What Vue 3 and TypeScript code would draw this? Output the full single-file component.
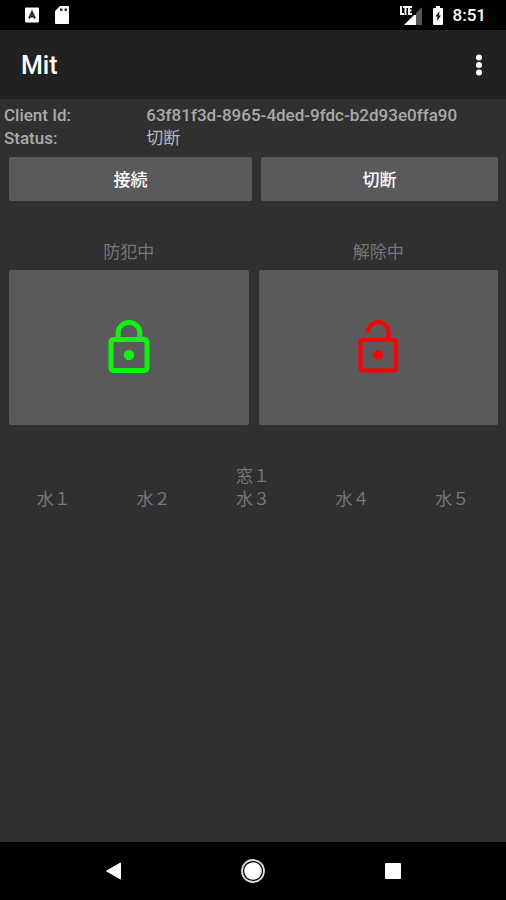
<script setup lang="ts">
import { ref } from 'vue'

const clientId = '63f81f3d-8965-4ded-9fdc-b2d93e0ffa90'
const status = ref('切断')
const windows: string[] = ['窓１']
const waterSensors: string[] = ['水１', '水２', '水３', '水４', '水５']
</script>

<template>
  <div class="screen">
    <div class="status-bar">
      <div class="status-group">
        <svg class="notice" viewBox="0 0 16 16" aria-hidden="true">
          <rect x="1" y="0.5" width="14" height="15" rx="1" fill="#fff" />
          <path d="M5 11.5 L8 5 L11 11.5 M6 9.5 H10" fill="none" stroke="#222" stroke-width="1.8" />
        </svg>
        <svg class="card" viewBox="0 0 16 20" aria-hidden="true">
          <path d="M6 1 H14 Q15 1 15 2 V18 Q15 19 14 19 H2 Q1 19 1 18 V6 Z" fill="#fff" />
          <path d="M6 3.5 H8.5 V6 H6 Z M10.5 3.5 H13 V6 H10.5 Z" fill="#333" />
        </svg>
      </div>
      <div class="status-group status-right">
        <svg class="signal" viewBox="0 0 24 20" aria-hidden="true">
          <path d="M17 8 L23 2 V20 H17 Z" fill="#555" />
          <path d="M5 20 L15 10 H17 V20 Z" fill="#fff" />
          <path d="M2 1 V9 H5 M4 2 H9 M6.5 2 V10 M13 2 H10 V9 H13 M10 5.5 H12.5" fill="none" stroke="#fff" stroke-width="1.9" />
        </svg>
        <svg class="battery" viewBox="0 0 12 20" aria-hidden="true">
          <path d="M4 1 H8 V3 H10 Q11 3 11 4 V19 Q11 20 10 20 H2 Q1 20 1 19 V4 Q1 3 2 3 H4 Z" fill="#fff" />
          <path d="M7.5 6 L3.5 11.5 H5.5 L5 16 L9 10.5 H7 Z" fill="#111" />
        </svg>
        <time class="clock">8:51</time>
      </div>
    </div>

    <header class="app-bar">
      <h1>Mit</h1>
      <button class="menu" type="button" aria-label="Menu">
        <svg viewBox="0 0 8 24" aria-hidden="true">
          <circle cx="4" cy="4.5" r="3" /><circle cx="4" cy="12" r="3" /><circle cx="4" cy="19.5" r="3" />
        </svg>
      </button>
    </header>

    <main>
      <dl class="info">
        <dt>Client Id:</dt>
        <dd class="client-id">{{ clientId }}</dd>
        <dt>Status:</dt>
        <dd>{{ status }}</dd>
      </dl>

      <div class="connection">
        <button class="tile" type="button">接続</button>
        <button class="tile" type="button">切断</button>
      </div>

      <div class="modes">
        <section>
          <h2 id="armed">防犯中</h2>
          <button class="tile lock" type="button" aria-labelledby="armed">
            <svg viewBox="0 0 42 56" aria-hidden="true">
              <rect x="3" y="19.5" width="36" height="31" rx="2.5" fill="none" stroke="#0cf50c" stroke-width="5" />
              <path d="M10.2 19 V13 A10.8 10.5 0 0 1 31.8 13 V19" fill="none" stroke="#0cf50c" stroke-width="5" />
              <circle cx="21" cy="35" r="5.2" fill="#0cf50c" />
            </svg>
          </button>
        </section>
        <section>
          <h2 id="disarmed">解除中</h2>
          <button class="tile lock" type="button" aria-labelledby="disarmed">
            <svg viewBox="0 0 42 56" aria-hidden="true">
              <rect x="3.5" y="20" width="35.5" height="30.5" rx="2" fill="none" stroke="#f00" stroke-width="4.2" />
              <path d="M10.4 12.5 C12 5.5 17 2.2 21.5 2.2 C27 2.2 31.5 7 31.5 13 V19" fill="none" stroke="#f00" stroke-width="4.2" />
              <circle cx="21" cy="35" r="5" fill="#f00" />
            </svg>
          </button>
        </section>
      </div>

      <div class="sensors">
        <div class="sensor-row"><span v-for="name in windows" :key="name">{{ name }}</span></div>
        <div class="sensor-row"><span v-for="name in waterSensors" :key="name">{{ name }}</span></div>
      </div>
    </main>

    <nav class="nav-bar" aria-label="System">
      <button type="button" aria-label="Back">
        <svg viewBox="0 0 24 24" aria-hidden="true"><path d="M5.5 12 L19.5 4 V20 Z" fill="#fff" stroke="#fff" stroke-linejoin="round" /></svg>
      </button>
      <button type="button" aria-label="Home">
        <svg viewBox="0 0 24 24" aria-hidden="true">
          <circle cx="12" cy="12" r="11" fill="none" stroke="#ddd" stroke-width="1.8" />
          <circle cx="12" cy="12" r="8.8" fill="#fff" />
        </svg>
      </button>
      <button type="button" aria-label="Overview">
        <svg viewBox="0 0 24 24" aria-hidden="true"><rect x="4" y="4" width="16" height="16" rx="1" fill="#fff" /></svg>
      </button>
    </nav>
  </div>
</template>

<style>
body {
  margin: 0;
  background: #303030;
}
</style>

<style scoped>
.screen {
  display: flex;
  flex-direction: column;
  min-height: 100vh;
  background: #303030;
  color: #b8b8b8;
  font-family: Roboto, "Noto Sans CJK JP", sans-serif;
  font-size: 17px;
  line-height: 23px;
}
button {
  margin: 0;
  padding: 0;
  border: 0;
  background: none;
  color: #fff;
  font: inherit;
}
svg {
  display: block;
}
.status-bar {
  display: flex;
  justify-content: space-between;
  align-items: center;
  height: 30px;
  padding: 0 20px 0 24px;
  background: #000;
}
.status-group {
  display: flex;
  align-items: center;
  gap: 14px;
}
.status-right {
  gap: 9px;
}
.notice {
  width: 16px;
  height: 16px;
}
.card {
  width: 16px;
  height: 20px;
}
.signal {
  width: 24px;
  height: 20px;
}
.battery {
  width: 12px;
  height: 20px;
}
.clock {
  color: #fff;
  font-weight: 500;
}
.app-bar {
  display: flex;
  justify-content: space-between;
  align-items: center;
  height: 69px;
  padding: 0 21px;
  background: #212121;
}
h1 {
  margin: 0;
  padding-top: 2px;
  color: #fff;
  font-size: 25px;
  font-weight: 500;
  line-height: 32px;
}
.menu {
  padding: 4px 2px;
}
.menu svg {
  width: 8px;
  height: 24px;
  fill: #fff;
}
main {
  flex: 1;
  padding: 5px 4px;
}
.info {
  display: grid;
  grid-template-columns: 2fr 5fr;
  margin: 0;
}
dt,
.client-id {
  font-weight: 500;
  color: #aaa;
}
dd {
  margin: 0;
}
.connection {
  display: grid;
  grid-template-columns: 243fr 237fr;
  gap: 9px;
  padding: 7px 4px 0 5px;
}
.tile {
  box-sizing: border-box;
  width: 100%;
  height: 44px;
  padding-top: 2px;
  border-radius: 2px;
  background: #5a5a5c;
  font-weight: 500;
}
.modes {
  display: grid;
  grid-template-columns: 1fr 1fr;
  gap: 10px;
  padding: 40px 4px 0 5px;
}
h2 {
  margin: 0 0 6px;
  color: #777;
  font-size: 17px;
  font-weight: 400;
  text-align: center;
}
.lock {
  display: flex;
  justify-content: center;
  align-items: center;
  height: 155px;
  padding-top: 0;
}
.lock svg {
  width: 42px;
  height: 56px;
}
.sensors {
  padding-top: 40px;
  color: #777;
}
.sensor-row {
  display: flex;
  text-align: center;
}
.sensor-row span {
  flex: 1;
}
.nav-bar {
  display: flex;
  justify-content: center;
  align-items: center;
  gap: 116px;
  height: 58px;
  background: #000;
}
.nav-bar svg {
  width: 24px;
  height: 24px;
}
</style>
